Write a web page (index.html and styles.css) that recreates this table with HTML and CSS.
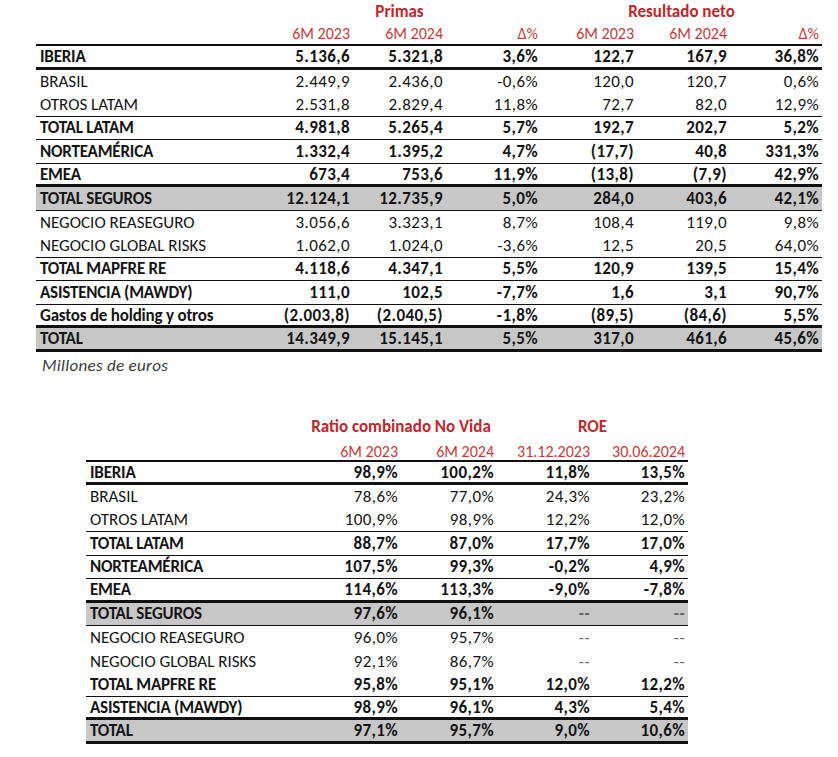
FILE: index.html
```html
<!DOCTYPE html>
<html lang="es">
<head>
<meta charset="utf-8">
<title>Primas y resultados</title>
<link rel="stylesheet" href="styles.css">
</head>
<body>
<section class="block top">
  <div class="tbl t1">
    <div class="row head">
      <div></div>
      <div class="grp g3">Primas</div>
      <div class="grp g3">Resultado neto</div>
    </div>
    <div class="row sub line2">
      <div></div><div>6M 2023</div><div>6M 2024</div><div>Δ%</div><div>6M 2023</div><div>6M 2024</div><div>Δ%</div>
    </div>
    <div class="row b thick"><div>IBERIA</div><div>5.136,6</div><div>5.321,8</div><div>3,6%</div><div>122,7</div><div>167,9</div><div>36,8%</div></div>
    <div class="row"><div>BRASIL</div><div>2.449,9</div><div>2.436,0</div><div>-0,6%</div><div>120,0</div><div>120,7</div><div>0,6%</div></div>
    <div class="row thin"><div>OTROS LATAM</div><div>2.531,8</div><div>2.829,4</div><div>11,8%</div><div>72,7</div><div>82,0</div><div>12,9%</div></div>
    <div class="row b thin"><div>TOTAL LATAM</div><div>4.981,8</div><div>5.265,4</div><div>5,7%</div><div>192,7</div><div>202,7</div><div>5,2%</div></div>
    <div class="row b thin"><div>NORTEAMÉRICA</div><div>1.332,4</div><div>1.395,2</div><div>4,7%</div><div>(17,7)</div><div>40,8</div><div>331,3%</div></div>
    <div class="row b thick"><div>EMEA</div><div>673,4</div><div>753,6</div><div>11,9%</div><div>(13,8)</div><div>(7,9)</div><div>42,9%</div></div>
    <div class="row b grey thin"><div>TOTAL SEGUROS</div><div>12.124,1</div><div>12.735,9</div><div>5,0%</div><div>284,0</div><div>403,6</div><div>42,1%</div></div>
    <div class="row"><div>NEGOCIO REASEGURO</div><div>3.056,6</div><div>3.323,1</div><div>8,7%</div><div>108,4</div><div>119,0</div><div>9,8%</div></div>
    <div class="row thin"><div>NEGOCIO GLOBAL RISKS</div><div>1.062,0</div><div>1.024,0</div><div>-3,6%</div><div>12,5</div><div>20,5</div><div>64,0%</div></div>
    <div class="row b thin"><div>TOTAL MAPFRE RE</div><div>4.118,6</div><div>4.347,1</div><div>5,5%</div><div>120,9</div><div>139,5</div><div>15,4%</div></div>
    <div class="row b thin"><div>ASISTENCIA (MAWDY)</div><div>111,0</div><div>102,5</div><div>-7,7%</div><div>1,6</div><div>3,1</div><div>90,7%</div></div>
    <div class="row b thick"><div>Gastos de holding y otros</div><div>(2.003,8)</div><div>(2.040,5)</div><div>-1,8%</div><div>(89,5)</div><div>(84,6)</div><div>5,5%</div></div>
    <div class="row b grey thick"><div>TOTAL</div><div>14.349,9</div><div>15.145,1</div><div>5,5%</div><div>317,0</div><div>461,6</div><div>45,6%</div></div>
  </div>
  <p class="note">Millones de euros</p>
</section>

<section class="block bottom">
  <div class="tbl t2">
    <div class="row head">
      <div></div>
      <div class="grp g2">Ratio combinado No Vida</div>
      <div class="grp g2">ROE</div>
    </div>
    <div class="row sub line2">
      <div></div><div>6M 2023</div><div>6M 2024</div><div>31.12.2023</div><div>30.06.2024</div>
    </div>
    <div class="row b thick"><div>IBERIA</div><div>98,9%</div><div>100,2%</div><div>11,8%</div><div>13,5%</div></div>
    <div class="row"><div>BRASIL</div><div>78,6%</div><div>77,0%</div><div>24,3%</div><div>23,2%</div></div>
    <div class="row thin"><div>OTROS LATAM</div><div>100,9%</div><div>98,9%</div><div>12,2%</div><div>12,0%</div></div>
    <div class="row b thin"><div>TOTAL LATAM</div><div>88,7%</div><div>87,0%</div><div>17,7%</div><div>17,0%</div></div>
    <div class="row b thin"><div>NORTEAMÉRICA</div><div>107,5%</div><div>99,3%</div><div>-0,2%</div><div>4,9%</div></div>
    <div class="row b thick"><div>EMEA</div><div>114,6%</div><div>113,3%</div><div>-9,0%</div><div>-7,8%</div></div>
    <div class="row b grey thin"><div>TOTAL SEGUROS</div><div>97,6%</div><div>96,1%</div><div class="dash">--</div><div class="dash">--</div></div>
    <div class="row"><div>NEGOCIO REASEGURO</div><div>96,0%</div><div>95,7%</div><div class="dash">--</div><div class="dash">--</div></div>
    <div class="row"><div>NEGOCIO GLOBAL RISKS</div><div>92,1%</div><div>86,7%</div><div class="dash">--</div><div class="dash">--</div></div>
    <div class="row b thin"><div>TOTAL MAPFRE RE</div><div>95,8%</div><div>95,1%</div><div>12,0%</div><div>12,2%</div></div>
    <div class="row b thick"><div>ASISTENCIA (MAWDY)</div><div>98,9%</div><div>96,1%</div><div>4,3%</div><div>5,4%</div></div>
    <div class="row b grey thick"><div>TOTAL</div><div>97,1%</div><div>95,7%</div><div>9,0%</div><div>10,6%</div></div>
  </div>
</section>
</body>
</html>
```
FILE: styles.css
```css
* { box-sizing: border-box; }
html, body { margin: 0; padding: 0; background: #fff; }
body {
  font-family: "Carlito", "Lato", "Liberation Sans", sans-serif;
  font-size: 17px;
  color: #141414;
}
.block { display: block; }
.top { padding-left: 36px; padding-top: 0; }
.bottom { padding-left: 86px; margin-top: 38px; }

.tbl { display: grid; }
.t1 { width: 786px; }
.t2 { width: 602px; }

.row {
  display: grid;
  height: 23.5px;
  align-items: center;
}
.t1 .row { grid-template-columns: 222px 95px 93px 95px 96px 93px 92px; }
.t2 .row { grid-template-columns: 219px 96px 96px 96px 95px; }

.row > div {
  text-align: right;
  padding-right: 3px;
  white-space: nowrap;
  letter-spacing: 0.4px;
}
.row > div:first-child {
  text-align: left;
  padding-left: 4px;
  padding-right: 0;
  letter-spacing: 0;
}
.row.b > div:first-child { letter-spacing: -0.2px; }

.row.head { height: 23px; }
.row.head .grp {
  text-align: center;
  padding: 0;
  color: #c0272d;
  font-weight: 700;
  letter-spacing: 0;
}
.t1 .g3 { grid-column: span 3; }
.t2 .g2 { grid-column: span 2; }
.t2 .row.head { height: 25px; }

.row.sub { color: #c73a3a; height: 23px; font-size: 16px; }
.row.sub > div { letter-spacing: 0; }
.t2 .row.sub { padding-top: 3px; }

.row.b { font-weight: 700; }
.row.grey { background: #c7c7c7; }
.line2 { border-bottom: 2px solid #111; }
.thin { border-bottom: 1.5px solid #111; }
.thick { border-bottom: 3.5px solid #111; }

.dash { color: #666; }

.note {
  margin: 3px 0 0 6px;
  font-style: italic;
  font-weight: 300;
  color: #3a3a3a;
  font-size: 17px;
  letter-spacing: 0.3px;
}
```
